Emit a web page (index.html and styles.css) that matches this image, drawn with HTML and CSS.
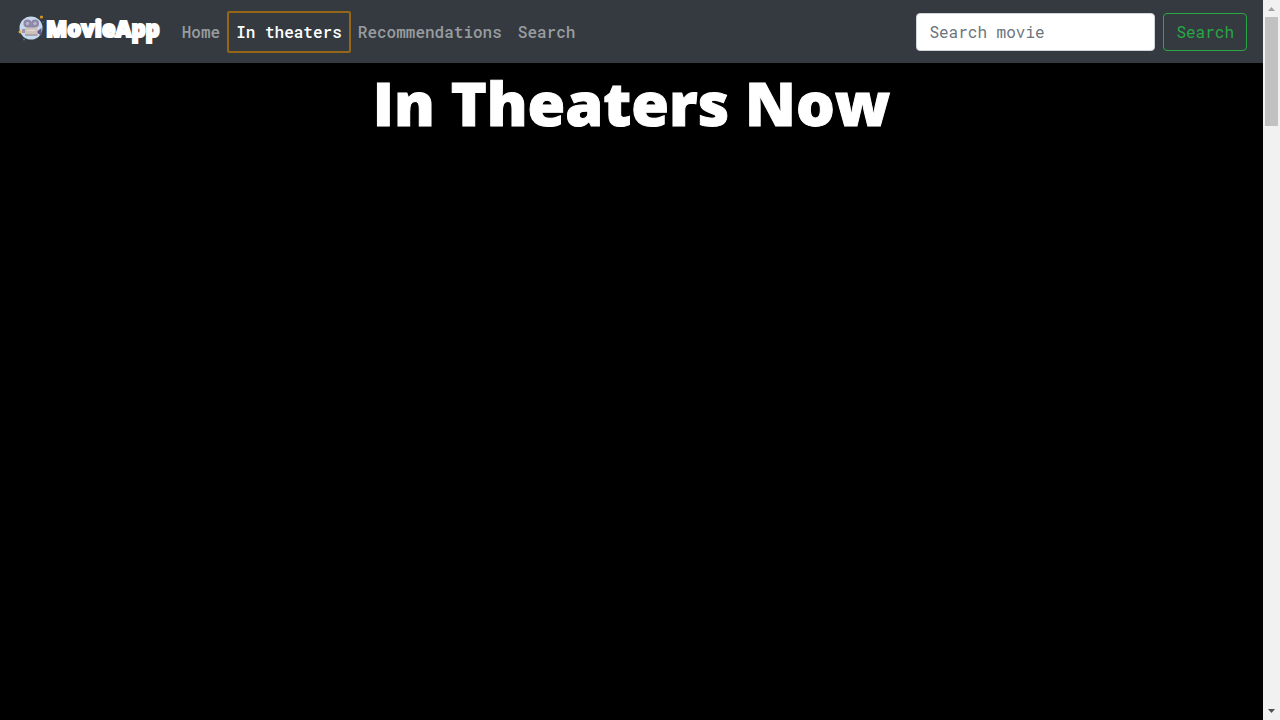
FILE: index.html
```html
<!DOCTYPE html>
<html lang="en">
<head>
<meta charset="utf-8">
<meta name="viewport" content="width=device-width, initial-scale=1">
<title>MovieApp</title>
<link rel="stylesheet" href="styles.css">
</head>
<body>
<div class="page">
  <header class="navbar">
    <a class="brand" href="#">
      <svg class="brand-icon" viewBox="0 0 30 30" aria-hidden="true">
        <circle cx="15" cy="15" r="11.5" fill="#c6d8ec"/>
        <circle cx="11.5" cy="10.500" r="4" fill="#8e87a6"/>
        <circle cx="19" cy="10.500" r="4" fill="#8e87a6"/>
        <path d="M11 12h8.500v3H11z" fill="#8e87a6"/>
        <circle cx="11.5" cy="10.500" r="1.700" fill="#b9b4cf"/>
        <circle cx="19" cy="10.500" r="1.700" fill="#b9b4cf"/>
        <rect x="9" y="14.500" width="12.5" height="8" rx="1" fill="#cdc2bd"/>
        <path d="M9 22h12.500" stroke="#8d8390" stroke-width="1"/>
        <path d="M11 17.500h8" stroke="#e3dad2" stroke-width="1"/>
        <path d="M6 16h3v4H6z" fill="#a096ac"/>
        <path d="M21.5 18l4-3v8l-4-3z" fill="#62598b"/>
        <circle cx="25.5" cy="4" r="1.6" fill="#d49a19"/>
        <circle cx="4" cy="19" r="1.4" fill="#e2b63b"/>
        <circle cx="27" cy="9" r=".7" fill="#5f7690"/>
        <circle cx="8" cy="26.5" r=".9" fill="#547a94"/>
      </svg>
      <span class="brand-name">MovieApp</span>
    </a>
    <nav class="nav" aria-label="Main">
      <a class="nav-link" href="#">Home</a>
      <a class="nav-link active" href="#" aria-current="page">In theaters</a>
      <a class="nav-link" href="#">Recommendations</a>
      <a class="nav-link" href="#">Search</a>
    </nav>
    <form class="search">
      <input class="search-input" type="search" placeholder="Search movie" aria-label="Search movie">
      <button class="search-button" type="submit">Search</button>
    </form>
  </header>
  <main class="content">
    <h1 class="title">In Theaters Now</h1>
  </main>
</div>
<div class="scrollbar" aria-hidden="true">
  <svg class="arrow" viewBox="0 0 17 17"><path d="M5 11h7L8.500 7z" fill="#a3a3a3"/></svg>
  <div class="thumb"></div>
  <svg class="arrow arrow-down" viewBox="0 0 17 17"><path d="M5 6h7l-3.500 4z" fill="#505050"/></svg>
</div>
</body>
</html>
```
FILE: styles.css
```css
* { box-sizing: border-box; }

body {
  margin: 0;
  display: flex;
  min-height: 100vh;
  background: #000;
  color: #fff;
  font: 16px/24px "Roboto Mono", "DejaVu Sans Mono", monospace;
}

.page { flex: 1; min-width: 0; }

.navbar {
  display: flex;
  align-items: center;
  padding: 8px 16px;
  background: #343a40;
}

.brand {
  display: flex;
  align-items: center;
  align-self: flex-start;
  height: 47px;
  padding-bottom: 8px;
  margin-right: 14px;
  color: #fff;
  text-decoration: none;
}

.brand-icon { width: 30px; height: 30px; }

.brand-name {
  font: 800 22px/32px "Baloo", "Open Sans", sans-serif;
  -webkit-text-stroke: 2px #fff;
}

.nav { display: flex; }

.nav-link {
  padding: 8px;
  color: #999c9f;
  font-weight: 500;
  text-decoration: none;
}

.nav-link.active {
  color: #fff;
  outline: 2px solid #946615;
  outline-offset: -1px;
  border-radius: 1px;
}

.search { display: flex; gap: 8px; margin-left: auto; }

.search-input,
.search-button {
  height: 38px;
  padding: 6px 12px;
  border: 1px solid #ced4da;
  border-radius: 4px;
  font: inherit;
}

.search-input { width: 239px; background: #fff; color: #495057; }
.search-input::placeholder { color: #6c757d; opacity: 1; }
.search-button { border-color: #28a745; background: transparent; color: #28a745; }

.title {
  margin: 0;
  font: 800 61px/80px "Baloo", "Open Sans", sans-serif;
  text-align: center;
  -webkit-text-stroke: 1px #fff;
}

.scrollbar {
  display: flex;
  flex-direction: column;
  width: 17px;
  background: #f1f1f1;
}

.arrow { width: 17px; height: 17px; }
.arrow-down { margin-top: auto; }
.thumb { height: 109px; margin: 0 2px; background: #c1c1c1; }
```
